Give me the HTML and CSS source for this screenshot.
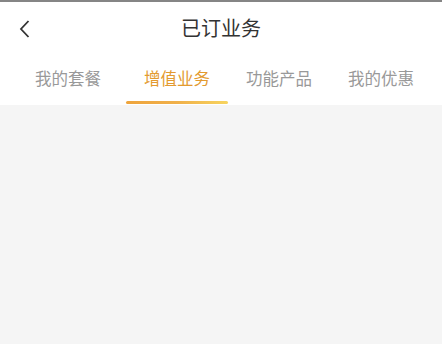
FILE: index.html
```html
<!DOCTYPE html>
<html lang="zh-CN">
<head>
<meta charset="utf-8">
<title>已订业务</title>
<link rel="stylesheet" href="styles.css">
</head>
<body>
<div class="page">
  <header class="navbar">
    <span class="back">
      <svg width="14" height="20" viewBox="0 0 14 20"><path d="M10.5 2 L3 10 L10.5 18" fill="none" stroke="#333" stroke-width="1.8"/></svg>
    </span>
    <h1 class="title">已订业务</h1>
  </header>
  <nav class="tabs">
    <div class="tab tab-first">我的套餐</div>
    <div class="tab active">增值业务</div>
    <div class="tab">功能产品</div>
    <div class="tab">我的优惠</div>
  </nav>
  <main class="content"></main>
</div>
</body>
</html>
```
FILE: styles.css
```css
* { box-sizing: border-box; }
html, body { margin: 0; padding: 0; height: 100%; }
body {
  font-family: "Noto Sans CJK SC", "Noto Sans", sans-serif;
  background: #f5f5f5;
}
.page {
  display: flex;
  flex-direction: column;
  height: 100%;
  border-top: 2px solid #858585;
}
.navbar {
  position: relative;
  height: 52px;
  background: #fff;
  display: flex;
  align-items: center;
  justify-content: center;
}
.back {
  position: absolute;
  left: 18px;
  top: 17px;
  width: 14px;
  height: 20px;
  display: flex;
}
.title {
  margin: 0;
  font-size: 20px;
  font-weight: normal;
  color: #333;
  line-height: 1;
}
.tabs {
  display: flex;
  background: #fff;
  height: 51px;
  padding-left: 17px;
}
.tab {
  width: 102px;
  display: flex;
  align-items: center;
  justify-content: center;
  font-size: 16.5px;
  color: #999;
  position: relative;
  padding-bottom: 3px;
}
.tab-first { margin-right: 7px; }
.tab.active { color: #e39a2f; }
.tab.active::after {
  content: "";
  position: absolute;
  left: 0;
  right: 0;
  bottom: 1px;
  height: 3px;
  border-radius: 2px;
  background: linear-gradient(90deg, #eea43c 0%, #f0b04a 50%, #f7d45f 100%);
}
.content { flex: 1; background: #f5f5f5; }
```
